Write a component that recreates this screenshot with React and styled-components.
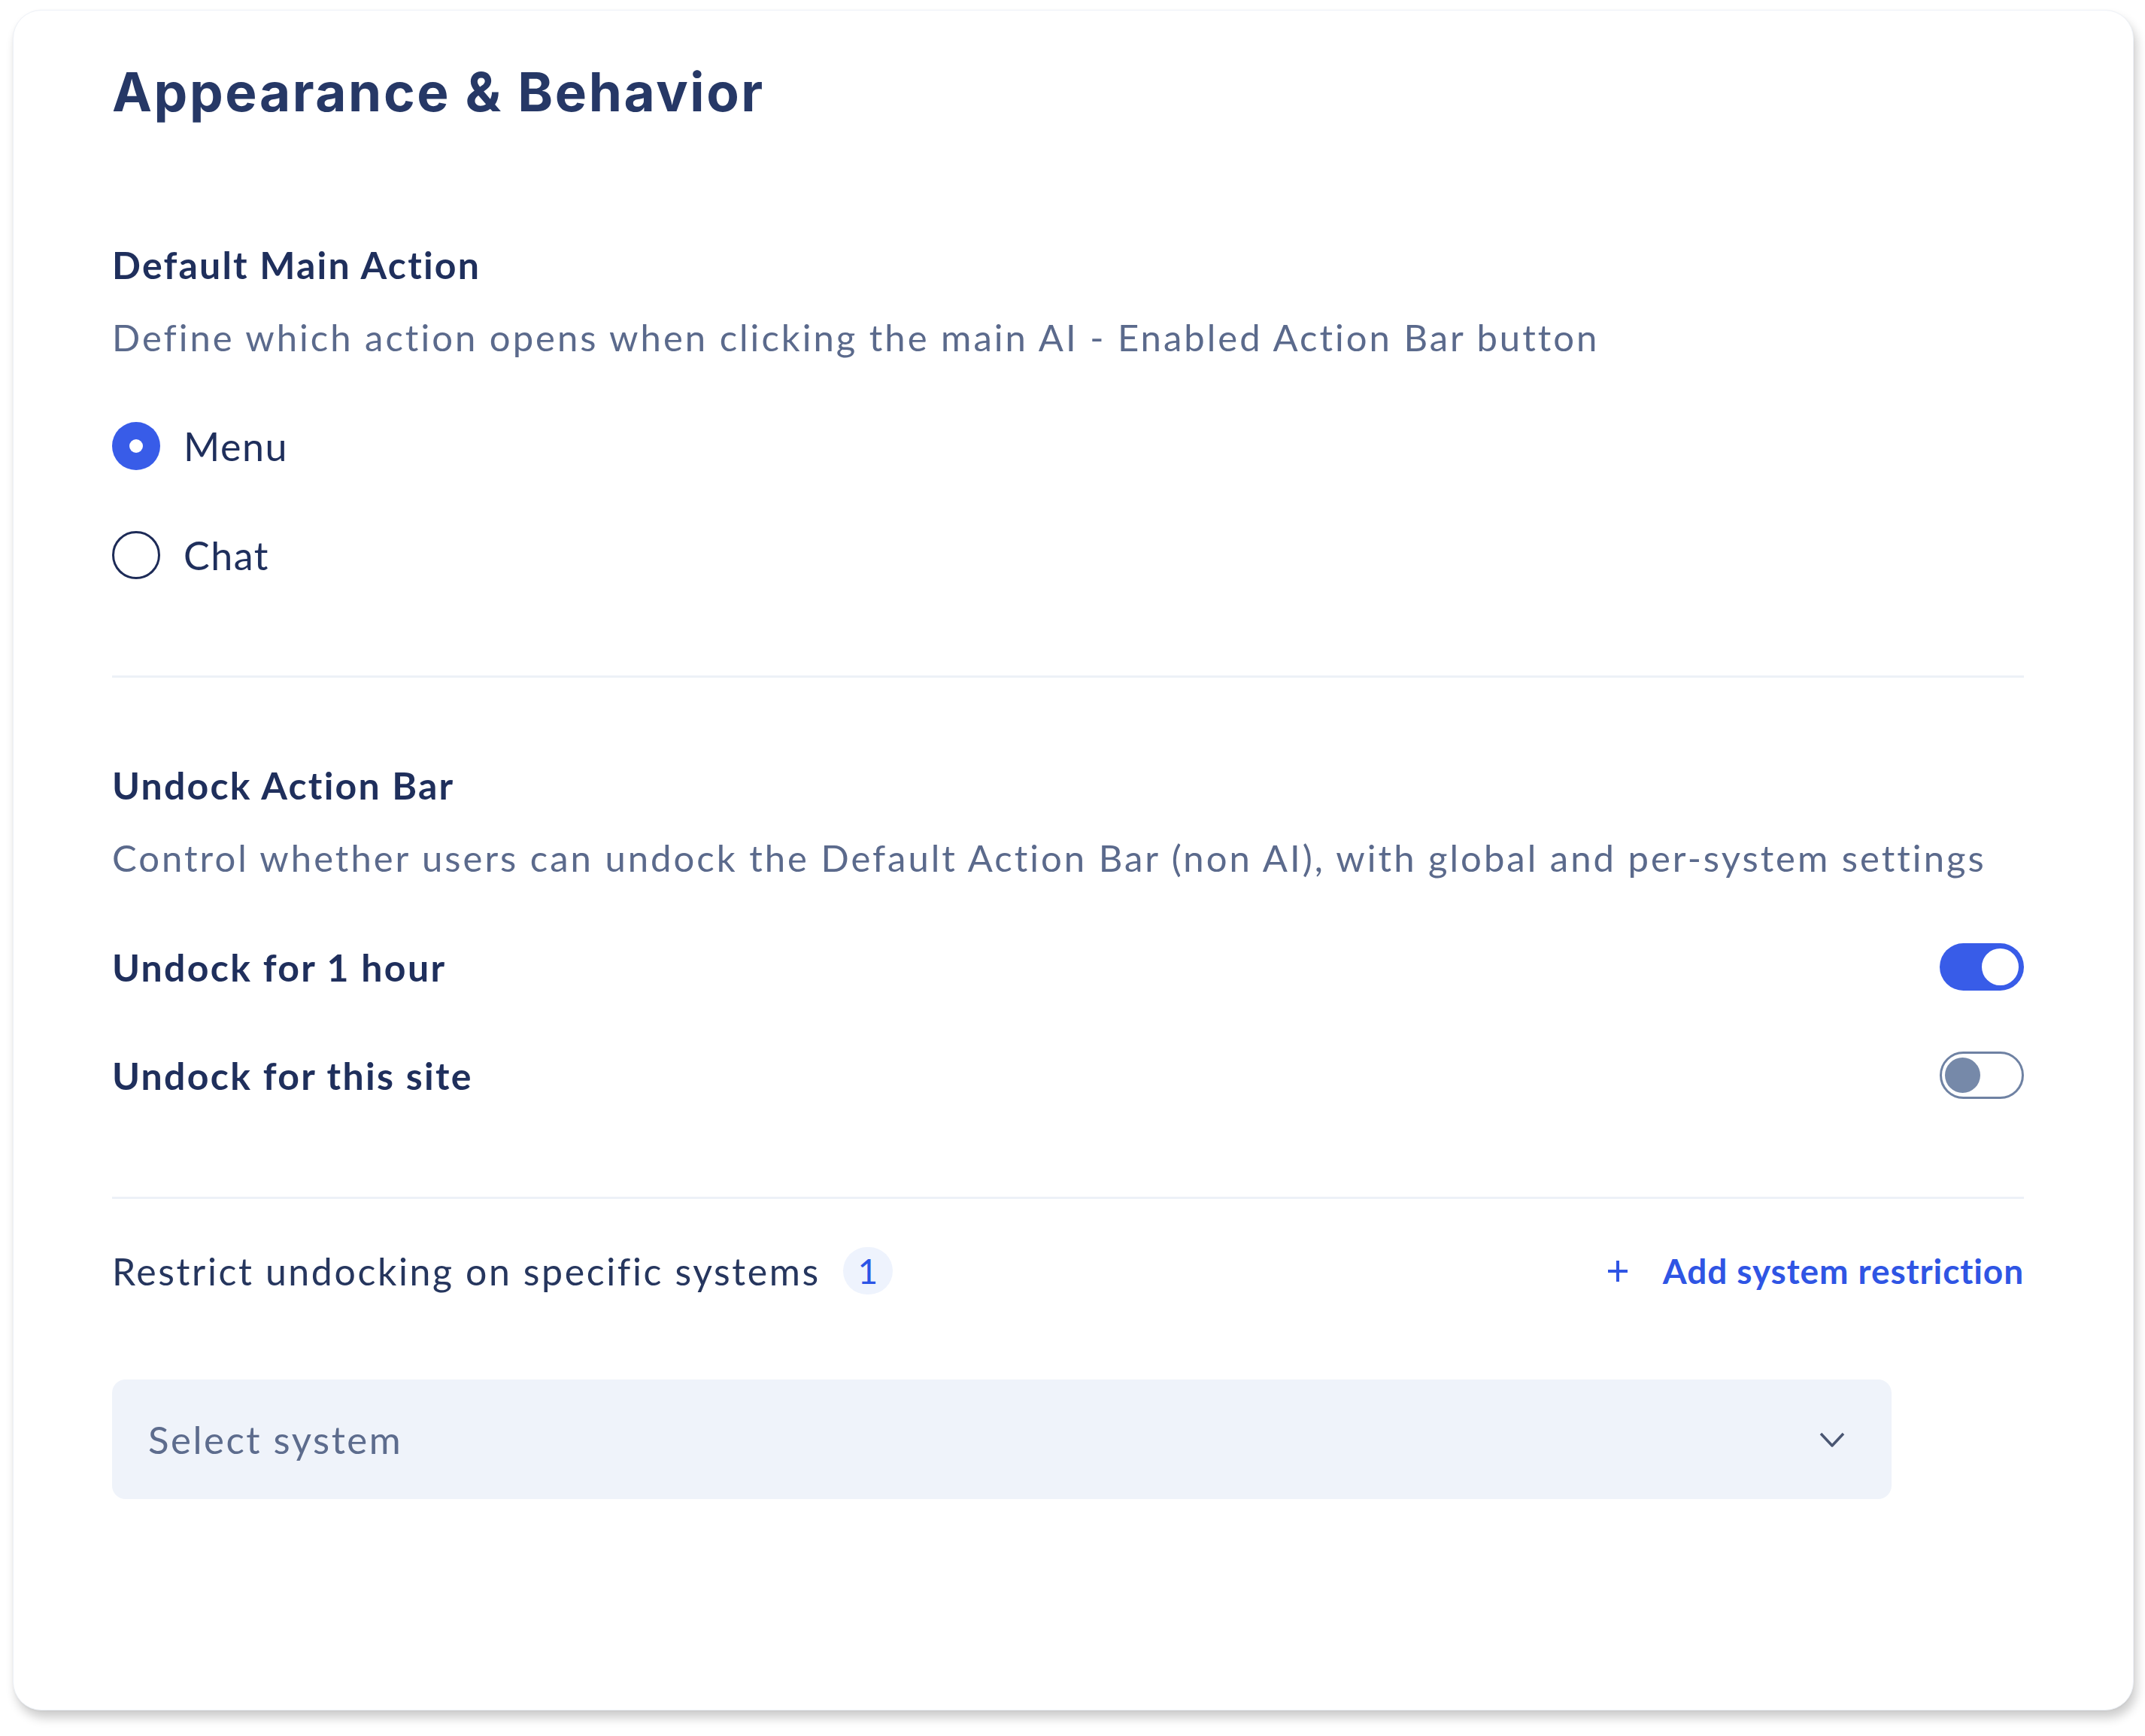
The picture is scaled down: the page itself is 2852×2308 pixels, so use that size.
import React from 'react';
import styled, { createGlobalStyle } from 'styled-components';

const GlobalStyle = createGlobalStyle`
    html, body {
        margin: 0;
        padding: 0;
        background: #ffffff;
    }
    body {
        font-family: 'Lato', 'Liberation Sans', sans-serif;
        -webkit-font-smoothing: antialiased;
    }
`;

const Page = styled.div`
    padding: 13px 15px 40px 17px;
`;

const Card = styled.div`
    background: #ffffff;
    border: 1px solid #edf1f7;
    border-radius: 38px;
    box-shadow: 4px 10px 14px rgba(0, 0, 0, 0.2), 0 1px 3px rgba(0, 0, 0, 0.04);
    padding: 66px 145px 280px 131px;
    display: flex;
    flex-direction: column;
`;

const Title = styled.h1`
    margin: 0;
    font-family: 'Inter', 'Liberation Sans', sans-serif;
    font-weight: 700;
    font-size: 71px;
    line-height: 84px;
    letter-spacing: 2.6px;
    color: #263866;
`;

const Section = styled.section`
    display: flex;
    flex-direction: column;
    margin-top: ${(p) => p.$top}px;
`;

const Heading = styled.h2`
    margin: 0;
    font-weight: 700;
    font-size: 50px;
    line-height: 60px;
    letter-spacing: 2.2px;
    color: #1f2f5c;
`;

const Description = styled.p`
    margin: 36px 0 0;
    font-size: 49px;
    line-height: 60px;
    letter-spacing: 3px;
    color: #5b6a8c;
`;

const RadioGroup = styled.div`
    display: flex;
    flex-direction: column;
    gap: 81px;
    margin-top: 83px;
`;

const RadioRow = styled.label`
    display: flex;
    align-items: center;
    gap: 31px;
    height: 64px;
    font-size: 52px;
    letter-spacing: 1.5px;
    color: #1f2f5c;
`;

const RadioDot = styled.span`
    box-sizing: border-box;
    width: 64px;
    height: 64px;
    border-radius: 50%;
    flex: none;
    display: flex;
    align-items: center;
    justify-content: center;
    background: ${(p) => (p.$checked ? '#385ce8' : '#ffffff')};
    border: ${(p) => (p.$checked ? 'none' : '3.5px solid #1d2b57')};

    &::after {
        content: '';
        display: ${(p) => (p.$checked ? 'block' : 'none')};
        width: 18px;
        height: 18px;
        border-radius: 50%;
        background: #ffffff;
    }
`;

const Divider = styled.hr`
    margin: ${(p) => p.$top}px 0 0;
    border: none;
    height: 3px;
    background: #edf1f7;
`;

const ToggleList = styled.div`
    display: flex;
    flex-direction: column;
    gap: 81px;
    margin-top: 84px;
`;

const ToggleRow = styled.div`
    display: flex;
    align-items: center;
    justify-content: space-between;
    height: 63px;
`;

const ToggleLabel = styled.span`
    font-weight: 700;
    font-size: 50px;
    letter-spacing: 2.3px;
    color: #1f2f5c;
`;

const Switch = styled.span`
    box-sizing: border-box;
    width: 112px;
    height: 63px;
    border-radius: 32px;
    padding: 0 7px;
    display: flex;
    align-items: center;
    justify-content: ${(p) => (p.$on ? 'flex-end' : 'flex-start')};
    background: ${(p) => (p.$on ? '#385ce8' : '#ffffff')};
    border: ${(p) => (p.$on ? 'none' : '3.5px solid #6f82a3')};

    &::after {
        content: '';
        width: ${(p) => (p.$on ? 49 : 47)}px;
        height: ${(p) => (p.$on ? 49 : 47)}px;
        border-radius: 50%;
        background: ${(p) => (p.$on ? '#ffffff' : '#7689a9')};
        margin-left: ${(p) => (p.$on ? 0 : -3)}px;
    }
`;

const RestrictRow = styled.div`
    display: flex;
    align-items: center;
    justify-content: space-between;
    height: 63px;
    margin-top: 64px;
`;

const RestrictLabel = styled.div`
    display: flex;
    align-items: center;
    gap: 30px;
    font-size: 50px;
    letter-spacing: 2.6px;
    color: #26365e;
`;

const Badge = styled.span`
    display: inline-flex;
    align-items: center;
    justify-content: center;
    width: 66px;
    height: 63px;
    border-radius: 32px;
    background: #eef3fd;
    color: #2b54e6;
    font-size: 46px;
    letter-spacing: 0;
`;

const AddButton = styled.button`
    display: flex;
    align-items: center;
    gap: 46px;
    padding: 0;
    border: none;
    background: none;
    font-family: 'Lato', 'Liberation Sans', sans-serif;
    font-weight: 700;
    font-size: 46px;
    letter-spacing: 0.9px;
    color: #2f55e4;
    cursor: pointer;
`;

const Select = styled.div`
    box-sizing: border-box;
    width: 2366px;
    height: 159px;
    margin-top: 113px;
    border-radius: 18px;
    background: #eff3fa;
    padding: 0 62px 0 48px;
    display: flex;
    align-items: center;
    justify-content: space-between;
    font-size: 51px;
    letter-spacing: 2.5px;
    color: #5d6c8d;
`;

const PlusIcon = () => (
    <svg width="28" height="30" viewBox="0 0 28 30" fill="none">
        <path d="M14 1v28M1 15h26" stroke="#2f55e4" strokeWidth="4" />
    </svg>
);

const ChevronIcon = () => (
    <svg width="34" height="20" viewBox="0 0 34 20" fill="none">
        <path d="M2 2l15 16L32 2" stroke="#4a5672" strokeWidth="3.5" strokeLinejoin="round" />
    </svg>
);

class App extends React.Component {
    render() {
        return (
            <Page>
                <GlobalStyle />
                <Card>
                    <Title>Appearance &amp; Behavior</Title>

                    <Section $top={158}>
                        <Heading>Default Main Action</Heading>
                        <Description>Define which action opens when clicking the main AI - Enabled Action Bar button</Description>
                        <RadioGroup>
                            <RadioRow>
                                <RadioDot $checked />
                                Menu
                            </RadioRow>
                            <RadioRow>
                                <RadioDot />
                                Chat
                            </RadioRow>
                        </RadioGroup>
                    </Section>

                    <Divider $top={128} />

                    <Section $top={113}>
                        <Heading>Undock Action Bar</Heading>
                        <Description>Control whether users can undock the Default Action Bar (non AI), with global and per-system settings</Description>
                        <ToggleList>
                            <ToggleRow>
                                <ToggleLabel>Undock for 1 hour</ToggleLabel>
                                <Switch $on />
                            </ToggleRow>
                            <ToggleRow>
                                <ToggleLabel>Undock for this site</ToggleLabel>
                                <Switch />
                            </ToggleRow>
                        </ToggleList>
                    </Section>

                    <Divider $top={130} />

                    <RestrictRow>
                        <RestrictLabel>
                            Restrict undocking on specific systems
                            <Badge>1</Badge>
                        </RestrictLabel>
                        <AddButton>
                            <PlusIcon />
                            Add system restriction
                        </AddButton>
                    </RestrictRow>

                    <Select>
                        Select system
                        <ChevronIcon />
                    </Select>
                </Card>
            </Page>
        );
    }
}

export default App;
